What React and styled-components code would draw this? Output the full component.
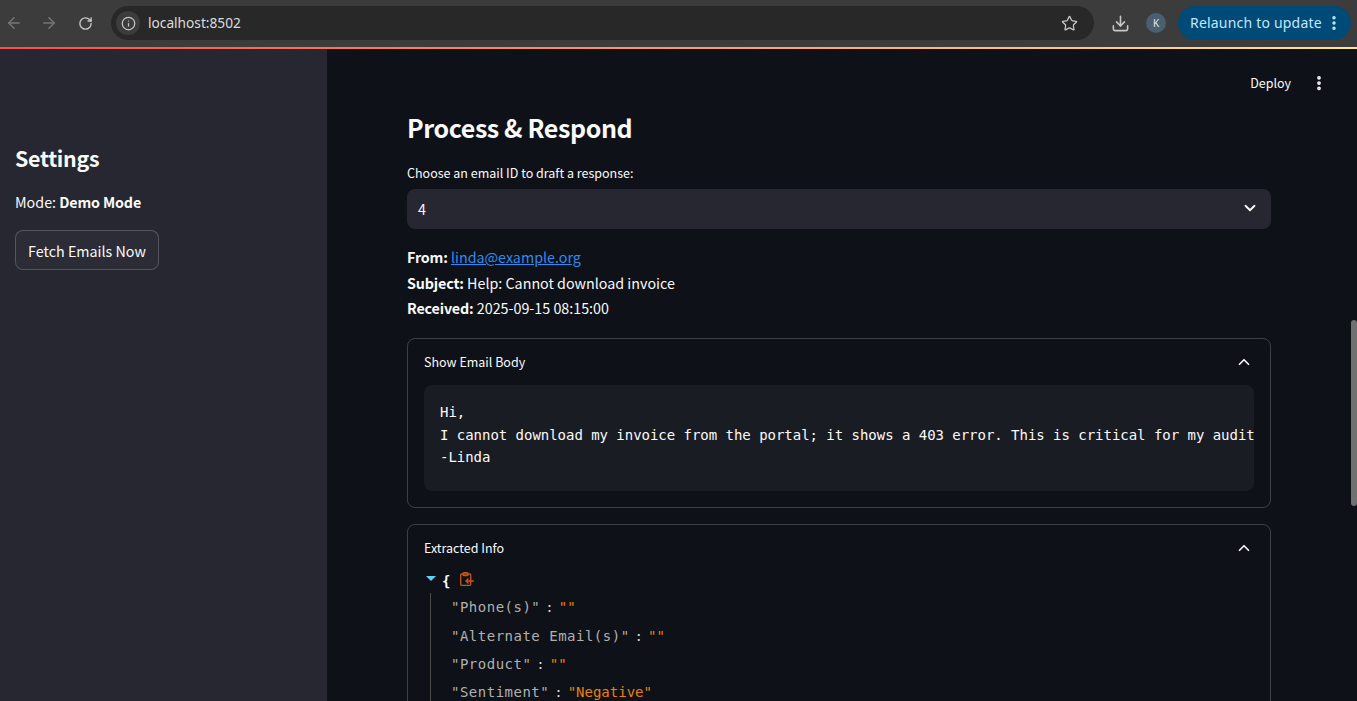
import React from "react"
import styled, { createGlobalStyle } from "styled-components"
import { ArrowLeft, ArrowRight, RotateCw, Info, Star, Download, EllipsisVertical, ChevronDown, ChevronUp } from "lucide-react"

const sans = `"Noto Sans CJK SC", "Noto Sans", sans-serif`
const mono = `"DejaVu Sans Mono", "Liberation Mono", monospace`

const Global = createGlobalStyle`
  html, body {
    margin: 0;
    height: 100%;
    overflow: hidden;
    background: #0e1117;
  }
  * { box-sizing: border-box; }
  strong { letter-spacing: -0.15px; }
`

const Page = styled.div`
  width: 1357px;
  height: 701px;
  display: flex;
  flex-direction: column;
  overflow: hidden;
  font-family: ${sans};
  color: #fafafa;
`

const BrowserBar = styled.div`
  height: 47px;
  flex: none;
  display: flex;
  align-items: center;
  background: #3c3c3c;
  padding-bottom: 1px;
  color: #c7c7c7;
`

const NavButton = styled.div`
  width: 28px;
  height: 36px;
  flex: none;
  display: flex;
  align-items: center;
  justify-content: center;
  margin-left: ${(p) => p.$left || 0}px;
  color: ${(p) => (p.$off ? "#757575" : "#c7c7c7")};
`

const Omnibox = styled.div`
  width: 983px;
  height: 34px;
  flex: none;
  margin-left: 12px;
  border-radius: 17px;
  background: #282828;
  display: flex;
  align-items: center;
  padding: 0 16px 0 5px;
`

const SiteInfo = styled.div`
  width: 24px;
  height: 24px;
  border-radius: 50%;
  background: #3c3c3c;
  display: flex;
  align-items: center;
  justify-content: center;
`

const Url = styled.span`
  margin-left: 8px;
  flex: 1;
  padding-bottom: 2px;
  font: 13.7px "Noto Sans", sans-serif;
  color: #dcdcdc;
`

const Avatar = styled.div`
  width: 20px;
  height: 20px;
  flex: none;
  border-radius: 50%;
  background: #4a6072;
  color: #e8e8e8;
  font: 10px "Noto Sans", sans-serif;
  display: flex;
  align-items: center;
  justify-content: center;
  margin-left: 12px;
`

const Relaunch = styled.div`
  width: 173px;
  height: 34px;
  flex: none;
  margin-left: 12px;
  border-radius: 17px;
  background: #004a77;
  color: #c2e7ff;
  display: flex;
  align-items: center;
  justify-content: space-between;
  padding: 0 8px 0 12px;
  font: 14px "Noto Sans", sans-serif;
  letter-spacing: 0.2px;
`

const RelaunchLabel = styled.span`
  padding-bottom: 2px;
`

const RainbowLine = styled.div`
  height: 2px;
  flex: none;
  background: linear-gradient(90deg, #ff4b4b, #ffe57f 100%);
`

const Body = styled.div`
  flex: 1;
  min-height: 0;
  display: flex;
  position: relative;
`

const Sidebar = styled.aside`
  width: 327px;
  flex: none;
  background: #262730;
  padding: 92px 16px 0 15px;
`

const SideTitle = styled.h2`
  margin: 0;
  font-size: 21.4px;
  line-height: 34px;
  font-weight: 700;
  letter-spacing: -0.3px;
`

const ModeLine = styled.p`
  margin: 14px 0 0;
  font-size: 14.3px;
  line-height: 26px;
`

const FetchButton = styled.button`
  display: block;
  margin-top: 15px;
  width: 144px;
  height: 40px;
  border: 1px solid rgba(250, 250, 250, 0.2);
  border-radius: 8px;
  background: #2b2c36;
  color: #fafafa;
  font: 14.3px ${sans};
  padding: 0;
`

const Main = styled.main`
  flex: 1;
  min-width: 0;
  background: #0e1117;
  padding: 0 86px 0 80px;
  overflow: hidden;
`

const TopActions = styled.div`
  position: absolute;
  top: 24px;
  right: 29px;
  display: flex;
  align-items: center;
  gap: 19px;
  font-size: 12.5px;
`

const PageScroll = styled.div`
  position: absolute;
  top: 271px;
  right: 0;
  width: 6px;
  height: 186px;
  border-radius: 3px;
  background: #6f7072;
`

const Heading = styled.h1`
  margin: 58px 0 0;
  font-size: 25px;
  line-height: 40px;
  font-weight: 700;
  letter-spacing: -0.4px;
`

const FieldLabel = styled.label`
  display: block;
  margin-top: 16px;
  font-size: 12.5px;
  line-height: 20px;
`

const SelectBox = styled.div`
  margin-top: 6px;
  height: 40px;
  border-radius: 8px;
  background: #262730;
  display: flex;
  align-items: center;
  justify-content: space-between;
  padding: 0 12px 2px 11px;
  font-size: 14.3px;
`

const MetaBlock = styled.div`
  margin-top: 15px;
  font-size: 14.3px;
  line-height: 25.6px;
`

const MailLink = styled.a`
  color: #2f8bf0;
  text-decoration: underline;
`

const Expander = styled.section`
  margin-top: ${(p) => p.$top}px;
  border: 1px solid rgba(250, 250, 250, 0.2);
  border-radius: 8px;
  padding: 0 16px 16px;
`

const ExpanderHead = styled.div`
  height: 46px;
  display: flex;
  align-items: center;
  justify-content: space-between;
  padding-right: 1px;
  font-size: 12.5px;
`

const CodeBlock = styled.pre`
  margin: 0;
  height: 106px;
  background: #1a1c24;
  border-radius: 8px;
  padding: 16.5px 0 0 16px;
  font: 14px/22.4px ${mono};
  letter-spacing: -0.03px;
  color: #fafafa;
`

const JsonRoot = styled.div`
  display: flex;
  align-items: center;
  height: 22px;
  margin-top: -1px;
  font: bold 14px ${mono};
`

const Caret = styled.span`
  width: 0;
  height: 0;
  margin: 0 6px 4px 2px;
  border-left: 5px solid transparent;
  border-right: 5px solid transparent;
  border-top: 5px solid #5fd3f3;
`

const CopyIcon = styled.svg`
  width: 14px;
  height: 14px;
  margin: 0 0 3px 9.6px;
  fill: none;
  stroke: #c8571f;
  stroke-width: 1.3;
`

const JsonBody = styled.div`
  margin: 1.3px 0 0 6px;
  padding-left: 20px;
  border-left: 1px solid #4a4a4a;
`

const JsonRow = styled.div`
  height: 28.4px;
  display: flex;
  align-items: center;
  font: 14px ${mono};
  white-space: pre;
`

const JsonKey = styled.span`
  color: #b0b0b0;
  letter-spacing: 0.5px;
`

const JsonColon = styled.span`
  color: #d8d8d8;
  margin: 0 5px;
`

const JsonValue = styled.span`
  color: #e8810e;
`

const fields = [
  ["Phone(s)", ""],
  ["Alternate Email(s)", ""],
  ["Product", ""],
  ["Sentiment", "Negative"],
]

const App = () => (
  <Page>
    <Global />
    <BrowserBar>
      <NavButton $off><ArrowLeft size={18} /></NavButton>
      <NavButton $off $left={7}><ArrowRight size={18} /></NavButton>
      <NavButton $left={8}><RotateCw size={15} strokeWidth={2.2} /></NavButton>
      <Omnibox>
        <SiteInfo><Info size={15} /></SiteInfo>
        <Url>localhost:8502</Url>
        <Star size={17} strokeWidth={1.8} />
      </Omnibox>
      <NavButton $left={12}><Download size={19} /></NavButton>
      <Avatar>K</Avatar>
      <Relaunch>
        <RelaunchLabel>Relaunch to update</RelaunchLabel>
        <EllipsisVertical size={18} strokeWidth={2.6} />
      </Relaunch>
    </BrowserBar>
    <RainbowLine />
    <Body>
      <Sidebar>
        <SideTitle>Settings</SideTitle>
        <ModeLine>Mode: <strong>Demo Mode</strong></ModeLine>
        <FetchButton>Fetch Emails Now</FetchButton>
      </Sidebar>
      <Main>
        <TopActions>
          Deploy
          <EllipsisVertical size={18} strokeWidth={3} />
        </TopActions>
        <Heading>Process &amp; Respond</Heading>
        <FieldLabel>Choose an email ID to draft a response:</FieldLabel>
        <SelectBox>
          4
          <ChevronDown size={18} strokeWidth={2.5} />
        </SelectBox>
        <MetaBlock>
          <div><strong>From:</strong> <MailLink>linda@example.org</MailLink></div>
          <div><strong>Subject:</strong> Help: Cannot download invoice</div>
          <div><strong>Received:</strong> 2025-09-15 08:15:00</div>
        </MetaBlock>
        <Expander $top={17}>
          <ExpanderHead>
            Show Email Body
            <ChevronUp size={18} strokeWidth={2.2} />
          </ExpanderHead>
          <CodeBlock>{`Hi,
I cannot download my invoice from the portal; it shows a 403 error. This is critical for my audit
-Linda`}</CodeBlock>
        </Expander>
        <Expander $top={16}>
          <ExpanderHead>
            Extracted Info
            <ChevronUp size={18} strokeWidth={2.2} />
          </ExpanderHead>
          <JsonRoot>
            <Caret />
            {"{"}
            <CopyIcon viewBox="0 0 14 14">
              <rect x="0.7" y="2" width="10" height="11.3" rx="1" />
              <rect x="3" y="0.7" width="5" height="3" rx="1" />
              <path d="M13.8 9H6M8.5 6.5L6 9l2.5 2.5" />
            </CopyIcon>
          </JsonRoot>
          <JsonBody>
            {fields.map(([k, v]) => (
              <JsonRow key={k}>
                <JsonKey>{`"${k}"`}</JsonKey>
                <JsonColon>:</JsonColon>
                <JsonValue>{`"${v}"`}</JsonValue>
              </JsonRow>
            ))}
          </JsonBody>
        </Expander>
      </Main>
      <PageScroll />
    </Body>
  </Page>
)

export default App
